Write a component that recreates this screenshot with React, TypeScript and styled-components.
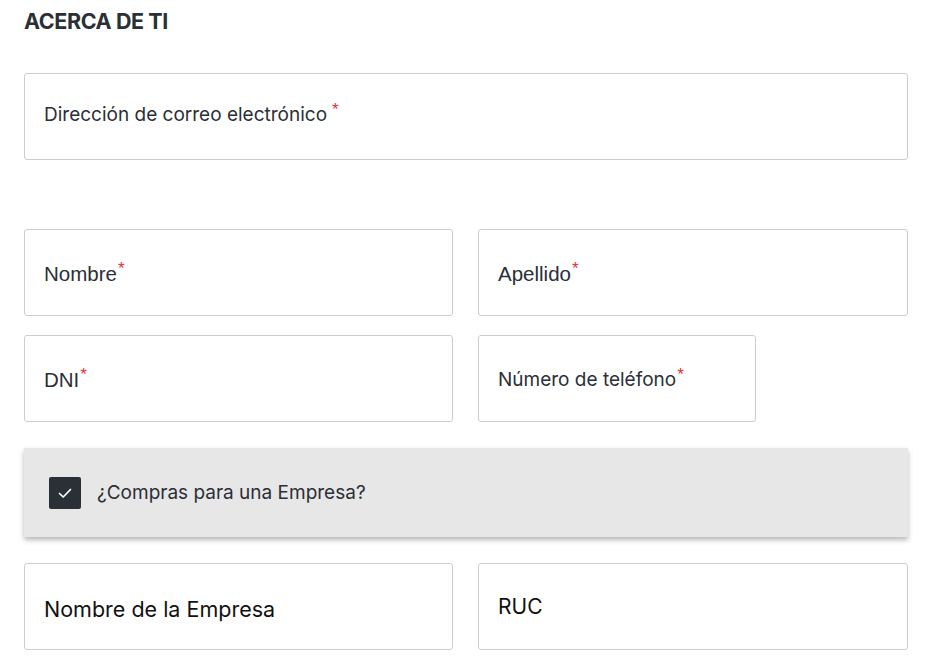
import React from "react";
import styled, { createGlobalStyle } from "styled-components";

const Global = createGlobalStyle`
  html, body { margin: 0; padding: 0; background: #fff; }
  body { font-family: Inter, "Open Sans", sans-serif; color: #2b2f36; }
`;

const Page = styled.div`
  width: 884px;
  padding: 8px 22px 0 24px;
  display: flex;
  flex-direction: column;
`;

const Heading = styled.h2`
  margin: 0;
  font-family: Inter, sans-serif;
  font-weight: 700;
  font-size: 21.5px;
  letter-spacing: -0.4px;
  line-height: 26px;
  color: #2b2f36;
`;

const Grid = styled.div<{ $mt: number; $rowGap?: number }>`
  display: grid;
  grid-template-columns: 429px 430px;
  column-gap: 25px;
  row-gap: ${(p) => p.$rowGap ?? 0}px;
  margin-top: ${(p) => p.$mt}px;
`;

const Field = styled.div<{ $full?: boolean; $w?: number }>`
  box-sizing: border-box;
  height: 87px;
  border: 1px solid #cdcdcd;
  border-radius: 3px;
  background: #fff;
  display: flex;
  align-items: center;
  padding-left: 19px;
  ${(p) => (p.$full ? "grid-column: 1 / span 2;" : "")}
  ${(p) => (p.$w ? `width: ${p.$w}px;` : "")}
`;

const Label = styled.span<{ $arial?: boolean; $dark?: boolean; $size?: number; $dy?: number }>`
  font-family: ${(p) => (p.$arial ? '"Liberation Sans", Arial, sans-serif' : 'Inter, sans-serif')};
  font-size: ${(p) => p.$size ?? 19}px;
  letter-spacing: 0;
  color: ${(p) => (p.$dark ? "#111" : "#2b2f36")};
  line-height: 1;
  margin-top: ${(p) => (p.$dy ?? 0) * 2}px;
`;

const Star = styled.sup<{ $gap?: number }>`
  color: #d8343c;
  font-family: "Liberation Sans", Arial, sans-serif;
  font-size: 17px;
  vertical-align: top;
  position: relative;
  top: -4px;
  margin-left: ${(p) => p.$gap ?? 1}px;
`;

const Panel = styled.div`
  grid-column: 1 / span 2;
  height: 89px;
  background: #e7e7e7;
  box-shadow: 0 3px 5px rgba(0, 0, 0, 0.28);
  display: flex;
  align-items: center;
  padding-left: 25px;
  gap: 16px;
  margin-bottom: 26px;
`;

const Box = styled.div`
  width: 32px;
  height: 32px;
  border-radius: 2px;
  background: #2b2f36;
  display: flex;
  align-items: center;
  justify-content: center;
`;

export default function App() {
  return (
    <>
      <Global />
      <Page>
        <Heading>ACERCA DE TI</Heading>
        <Grid $mt={39}>
          <Field $full>
            <Label $dy={-2}>
              Dirección de correo electrónico<Star $gap={5}>*</Star>
            </Label>
          </Field>
        </Grid>
        <Grid $mt={69} $rowGap={19}>
          <Field>
            <Label $arial $size={20.5} $dy={2}>
              Nombre<Star>*</Star>
            </Label>
          </Field>
          <Field>
            <Label $arial $size={20.5} $dy={2}>
              Apellido<Star>*</Star>
            </Label>
          </Field>
          <Field>
            <Label $arial $size={20.5} $dy={2}>
              DNI<Star>*</Star>
            </Label>
          </Field>
          <Field $w={278}>
            <Label $dy={1}>
              Número de teléfono<Star>*</Star>
            </Label>
          </Field>
        </Grid>
        <Grid $mt={26}>
          <Panel>
            <Box>
              <svg width="18" height="18" viewBox="0 0 18 18">
                <path d="M3.5 9.5 L7.2 13 L14.5 5.5" fill="none" stroke="#fff" strokeWidth="1.7" strokeLinecap="round" strokeLinejoin="round" />
              </svg>
            </Box>
            <Label>¿Compras para una Empresa?</Label>
          </Panel>
          <Field>
            <Label $dark $size={21.5} $dy={3}>Nombre de la Empresa</Label>
          </Field>
          <Field>
            <Label $dark $size={21}>RUC</Label>
          </Field>
        </Grid>
      </Page>
    </>
  );
}
